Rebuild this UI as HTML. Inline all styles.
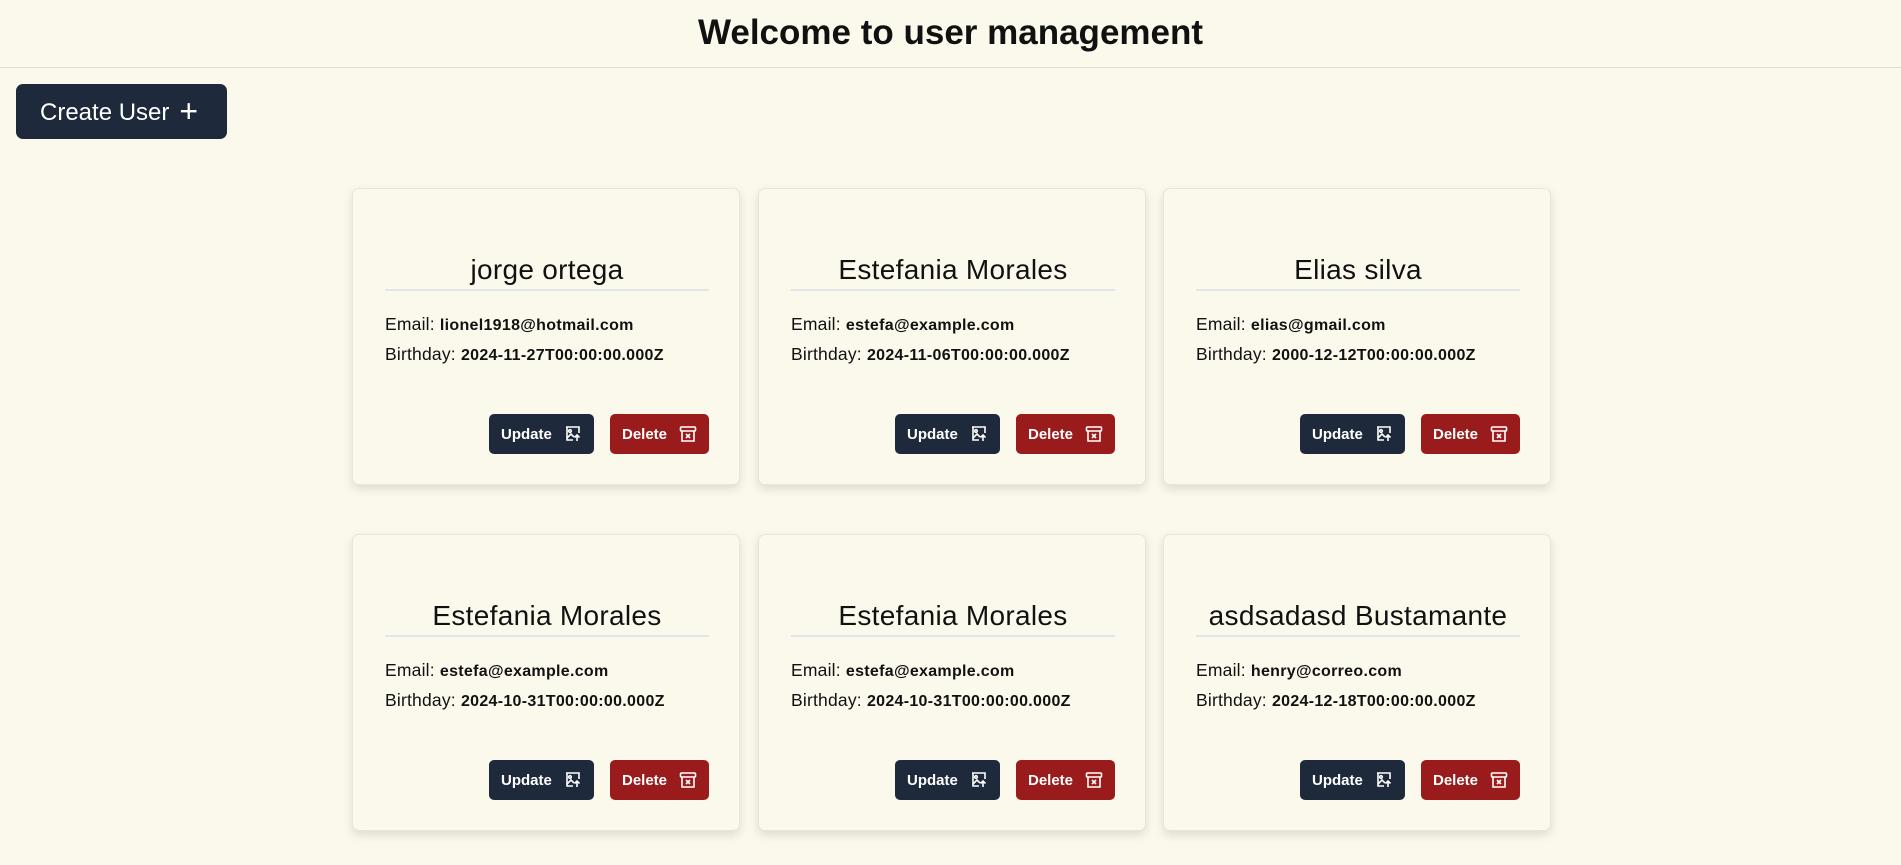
<!DOCTYPE html>
<html><head><style>
body{margin:0;width:1901px;height:865px;background:#fbf9eb;font-family:"Liberation Sans",sans-serif;overflow:hidden;position:relative;color:#111}
.hdr{position:absolute;left:0;top:0;width:1901px;height:67px;border-bottom:1px solid #e0ddd2;text-align:center;line-height:66px;font-size:35px;font-weight:bold}
.create{position:absolute;left:16px;top:84px;width:211px;height:55px;background:#1e293b;border-radius:7px;color:#fff;font-size:24px;line-height:55px;box-sizing:border-box;padding-left:24px}
.create span{font-size:32px;font-weight:300;margin-left:10px;vertical-align:-2px}
.card{position:absolute;width:388px;height:297px;border:1px solid #e8e6dc;border-radius:7px;box-sizing:border-box;box-shadow:0 4px 10px rgba(0,0,0,.12);background:#fbf9eb}
.name{position:absolute;left:32px;width:324px;top:62px;height:38px;border-bottom:2px solid #e2e5ea;text-align:center;font-size:28px;line-height:38px;letter-spacing:0.3px}
.info{position:absolute;left:32px;top:121px;font-size:17.5px;line-height:29px;white-space:nowrap;letter-spacing:0.2px}
.info b{font-size:16px;letter-spacing:0.3px}
.btn{position:absolute;top:225px;height:40px;border-radius:5px;color:#fff;font-weight:bold;font-size:15px;line-height:41px;box-sizing:border-box;padding-left:12px}
.up{left:136px;width:105px;background:#1e293b}
.del{left:257px;width:99px;background:#991b1b}
.btn svg{position:absolute;right:12px;top:11px}
</style></head><body>
<div class="hdr">Welcome to user management</div>
<div class="create">Create User<span>+</span></div>

<div class="card" style="left:352px;top:188px"><div class="name">jorge ortega</div><div class="info">Email: <b>lionel1918@hotmail.com</b><br>Birthday: <b>2024-11-27T00:00:00.000Z</b></div>
<div class="btn up">Update<svg width="18" height="18" viewBox="0 0 18 18" fill="none" stroke="#fff" stroke-width="1.6"><path d="M9 2H3v13h6M2 2h13v6"/><circle cx="6" cy="6" r="1.3"/><path d="M3 13l4-4 3 3M13 16v-6M10.5 12.5L13 10l2.5 2.5"/></svg></div>
<div class="btn del">Delete<svg width="18" height="18" viewBox="0 0 18 18" fill="none" stroke="#fff" stroke-width="1.6"><rect x="1.5" y="2" width="15" height="4" rx="1"/><path d="M3 6v10h12V6M7 9l4 4M11 9l-4 4"/></svg></div></div>

<div class="card" style="left:758px;top:188px"><div class="name">Estefania Morales</div><div class="info">Email: <b>estefa@example.com</b><br>Birthday: <b>2024-11-06T00:00:00.000Z</b></div>
<div class="btn up">Update<svg width="18" height="18" viewBox="0 0 18 18" fill="none" stroke="#fff" stroke-width="1.6"><path d="M9 2H3v13h6M2 2h13v6"/><circle cx="6" cy="6" r="1.3"/><path d="M3 13l4-4 3 3M13 16v-6M10.5 12.5L13 10l2.5 2.5"/></svg></div>
<div class="btn del">Delete<svg width="18" height="18" viewBox="0 0 18 18" fill="none" stroke="#fff" stroke-width="1.6"><rect x="1.5" y="2" width="15" height="4" rx="1"/><path d="M3 6v10h12V6M7 9l4 4M11 9l-4 4"/></svg></div></div>

<div class="card" style="left:1163px;top:188px"><div class="name">Elias silva</div><div class="info">Email: <b>elias@gmail.com</b><br>Birthday: <b>2000-12-12T00:00:00.000Z</b></div>
<div class="btn up">Update<svg width="18" height="18" viewBox="0 0 18 18" fill="none" stroke="#fff" stroke-width="1.6"><path d="M9 2H3v13h6M2 2h13v6"/><circle cx="6" cy="6" r="1.3"/><path d="M3 13l4-4 3 3M13 16v-6M10.5 12.5L13 10l2.5 2.5"/></svg></div>
<div class="btn del">Delete<svg width="18" height="18" viewBox="0 0 18 18" fill="none" stroke="#fff" stroke-width="1.6"><rect x="1.5" y="2" width="15" height="4" rx="1"/><path d="M3 6v10h12V6M7 9l4 4M11 9l-4 4"/></svg></div></div>

<div class="card" style="left:352px;top:534px"><div class="name">Estefania Morales</div><div class="info">Email: <b>estefa@example.com</b><br>Birthday: <b>2024-10-31T00:00:00.000Z</b></div>
<div class="btn up">Update<svg width="18" height="18" viewBox="0 0 18 18" fill="none" stroke="#fff" stroke-width="1.6"><path d="M9 2H3v13h6M2 2h13v6"/><circle cx="6" cy="6" r="1.3"/><path d="M3 13l4-4 3 3M13 16v-6M10.5 12.5L13 10l2.5 2.5"/></svg></div>
<div class="btn del">Delete<svg width="18" height="18" viewBox="0 0 18 18" fill="none" stroke="#fff" stroke-width="1.6"><rect x="1.5" y="2" width="15" height="4" rx="1"/><path d="M3 6v10h12V6M7 9l4 4M11 9l-4 4"/></svg></div></div>

<div class="card" style="left:758px;top:534px"><div class="name">Estefania Morales</div><div class="info">Email: <b>estefa@example.com</b><br>Birthday: <b>2024-10-31T00:00:00.000Z</b></div>
<div class="btn up">Update<svg width="18" height="18" viewBox="0 0 18 18" fill="none" stroke="#fff" stroke-width="1.6"><path d="M9 2H3v13h6M2 2h13v6"/><circle cx="6" cy="6" r="1.3"/><path d="M3 13l4-4 3 3M13 16v-6M10.5 12.5L13 10l2.5 2.5"/></svg></div>
<div class="btn del">Delete<svg width="18" height="18" viewBox="0 0 18 18" fill="none" stroke="#fff" stroke-width="1.6"><rect x="1.5" y="2" width="15" height="4" rx="1"/><path d="M3 6v10h12V6M7 9l4 4M11 9l-4 4"/></svg></div></div>

<div class="card" style="left:1163px;top:534px"><div class="name">asdsadasd Bustamante</div><div class="info">Email: <b>henry@correo.com</b><br>Birthday: <b>2024-12-18T00:00:00.000Z</b></div>
<div class="btn up">Update<svg width="18" height="18" viewBox="0 0 18 18" fill="none" stroke="#fff" stroke-width="1.6"><path d="M9 2H3v13h6M2 2h13v6"/><circle cx="6" cy="6" r="1.3"/><path d="M3 13l4-4 3 3M13 16v-6M10.5 12.5L13 10l2.5 2.5"/></svg></div>
<div class="btn del">Delete<svg width="18" height="18" viewBox="0 0 18 18" fill="none" stroke="#fff" stroke-width="1.6"><rect x="1.5" y="2" width="15" height="4" rx="1"/><path d="M3 6v10h12V6M7 9l4 4M11 9l-4 4"/></svg></div></div>
</body></html>
